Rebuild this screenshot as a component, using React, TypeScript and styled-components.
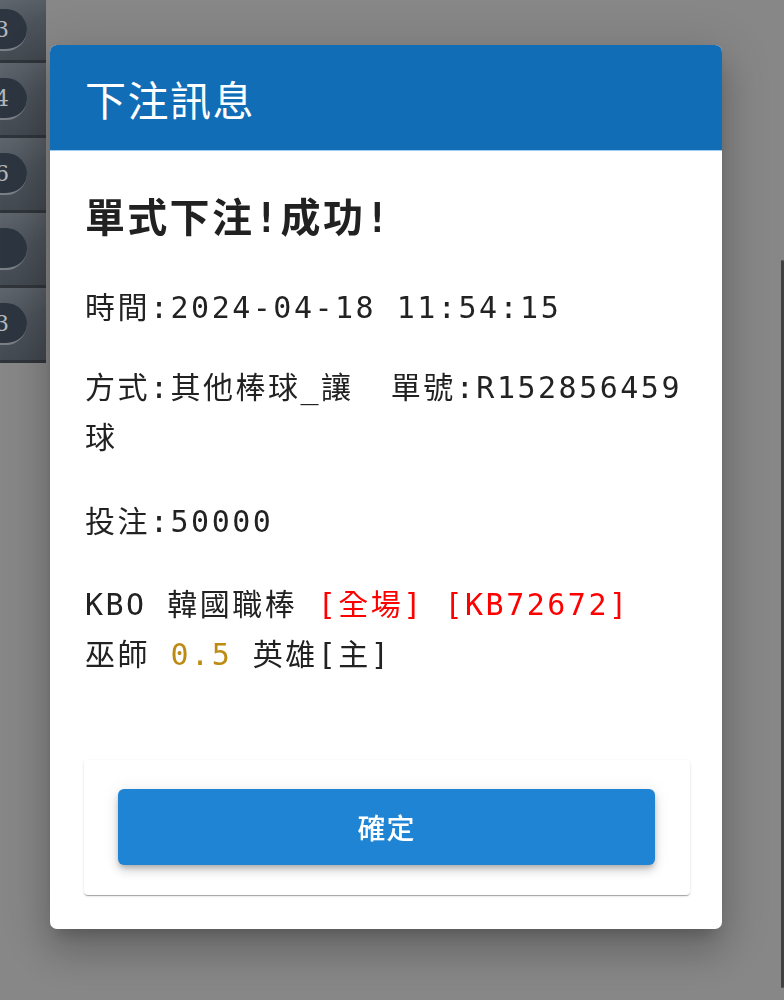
import styled, { createGlobalStyle } from 'styled-components'

const GlobalStyle = createGlobalStyle`
  html, body {
    margin: 0;
    padding: 0;
    height: 100%;
    overflow: hidden;
    background: #878787;
  }
  #root {
    height: 100%;
  }
`

const monoStack = `'DejaVu Sans Mono', 'Noto Sans CJK TC', monospace`

const sideRows = [
  { label: '3', first: true },
  { label: '4' },
  { label: '6' },
  { label: '' },
  { label: '3' },
]

const App = () => {
  return (
    <>
      <GlobalStyle />
      <StyledPage>
        <StyledSideList>
          {sideRows.map((row, i) => (
            <StyledSideRow key={i} $first={row.first}>
              <StyledSidePill>{row.label}</StyledSidePill>
            </StyledSideRow>
          ))}
        </StyledSideList>
        <StyledScrollTrack>
          <StyledScrollThumb />
        </StyledScrollTrack>
      </StyledPage>

      <StyledOverlay>
        <StyledDialog>
          <StyledDialogHeader>下注訊息</StyledDialogHeader>
          <StyledDialogBody>
            <StyledResultTitle>單式下注!成功!</StyledResultTitle>
            <StyledInfoLine $gap={30}>時間:2024-04-18 11:54:15</StyledInfoLine>
            <StyledInfoSplit>
              <StyledInfoMain>方式:其他棒球_讓球</StyledInfoMain>
              <StyledInfoSide>單號:R152856459</StyledInfoSide>
            </StyledInfoSplit>
            <StyledInfoLine $gap={33}>投注:50000</StyledInfoLine>
            <StyledInfoLine $gap={0}>
              KBO 韓國職棒 <StyledMark $tone="red">[全場]</StyledMark>{' '}
              <StyledMark $tone="red">[KB72672]</StyledMark>
              <br />
              巫師 <StyledMark $tone="gold">0.5</StyledMark> 英雄[主]
            </StyledInfoLine>
          </StyledDialogBody>
          <StyledActionCard>
            <StyledConfirmButton type="button">確定</StyledConfirmButton>
          </StyledActionCard>
        </StyledDialog>
      </StyledOverlay>
    </>
  )
}

export default App

const StyledPage = styled.div`
  display: flex;
  justify-content: space-between;
  height: 1000px;
`

const StyledSideList = styled.ul`
  list-style: none;
  margin: 0;
  padding: 0;
  width: 46px;
  display: flex;
  flex-direction: column;
  align-self: flex-start;
  overflow: hidden;
`

const StyledSideRow = styled.li<{ $first?: boolean }>`
  height: ${(p) => (p.$first ? '60px' : '72px')};
  display: flex;
  align-items: center;
  justify-content: flex-end;
  padding-right: 19px;
  background: linear-gradient(160deg, #60666d 0%, #4d535b 45%, #41474e 100%);
  border-bottom: 3px solid #30353b;
`

const StyledSidePill = styled.span`
  flex-shrink: 0;
  width: 50px;
  height: 40px;
  border-radius: 22px;
  background: #2d3640;
  border-bottom: 2px solid #7b8086;
  display: flex;
  align-items: center;
  justify-content: center;
  color: #b5b9be;
  font-family: 'DejaVu Serif', serif;
  font-size: 22px;
`

const StyledScrollTrack = styled.div`
  width: 3px;
  padding-top: 260px;
`

const StyledScrollThumb = styled.div`
  width: 3px;
  height: 728px;
  border-radius: 2px;
  background: #414141;
`

const StyledOverlay = styled.div`
  position: fixed;
  inset: 0;
  display: flex;
  align-items: flex-start;
  padding: 45px 62px 0 50px;
`

const StyledDialog = styled.div`
  width: 672px;
  height: 884px;
  display: flex;
  flex-direction: column;
  background: #fff;
  border-radius: 7px;
  overflow: hidden;
  box-shadow:
    0 11px 15px -7px rgba(0, 0, 0, 0.2),
    0 24px 38px 3px rgba(0, 0, 0, 0.14),
    0 9px 46px 8px rgba(0, 0, 0, 0.12);
`

const StyledDialogHeader = styled.h2`
  margin: 0;
  box-sizing: border-box;
  height: 106px;
  flex-shrink: 0;
  display: flex;
  align-items: center;
  padding-left: 35px;
  background: #116db6;
  border-bottom: 1px solid #9fcbee;
  color: #fff;
  font-family: 'Noto Sans CJK TC', sans-serif;
  font-size: 41px;
  font-weight: 400;
  letter-spacing: 1.5px;
`

const StyledDialogBody = styled.div`
  box-sizing: border-box;
  height: 580px;
  flex-shrink: 0;
  overflow: hidden;
  padding: 42px 40px 0 35px;
  color: #222;
`

const StyledResultTitle = styled.h3`
  margin: 0 0 40px;
  line-height: 50px;
  font-family: ${monoStack};
  font-size: 40px;
  font-weight: 700;
  letter-spacing: 2.3px;
  color: #212121;
`

const StyledInfoLine = styled.p<{ $gap: number }>`
  margin: 0 0 ${(p) => p.$gap}px;
  line-height: 50px;
  font-family: ${monoStack};
  font-size: 30px;
  letter-spacing: 2.5px;
`

const StyledInfoSplit = styled.div`
  display: flex;
  align-items: flex-start;
  gap: 20px;
  margin: 0 0 34px;
  line-height: 50px;
  font-family: ${monoStack};
  font-size: 30px;
  letter-spacing: 2.5px;
`

const StyledInfoMain = styled.span`
  flex: 1 1 0;
  min-width: 0;
`

const StyledInfoSide = styled.span`
  flex-shrink: 0;
`

const StyledMark = styled.span<{ $tone: 'red' | 'gold' }>`
  color: ${(p) => (p.$tone === 'red' ? '#ff0000' : '#bd8a12')};
`

const StyledActionCard = styled.div`
  margin: 29px 32px 0 34px;
  padding: 29px 35px 30px 34px;
  background: #fff;
  border-radius: 4px;
  box-shadow:
    0 2px 1px -1px rgba(0, 0, 0, 0.2),
    0 1px 1px 0 rgba(0, 0, 0, 0.14),
    0 1px 3px 0 rgba(0, 0, 0, 0.12);
`

const StyledConfirmButton = styled.button`
  display: block;
  width: 100%;
  height: 76px;
  border: none;
  border-radius: 6px;
  background: #1f84d4;
  color: #fff;
  font-family: 'Noto Sans CJK TC', sans-serif;
  font-size: 28px;
  font-weight: 500;
  letter-spacing: 1px;
  cursor: pointer;
  box-shadow:
    0 3px 5px -1px rgba(0, 0, 0, 0.2),
    0 6px 10px 0 rgba(0, 0, 0, 0.14),
    0 1px 18px 0 rgba(0, 0, 0, 0.08);
`
